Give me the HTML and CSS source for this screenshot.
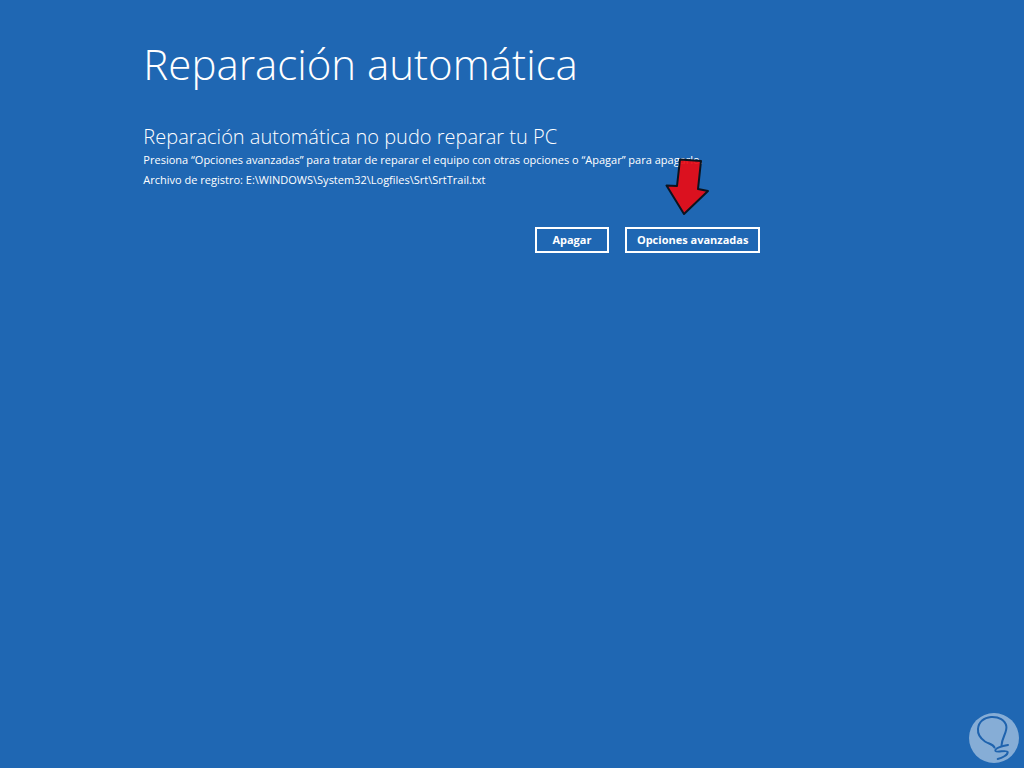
FILE: index.html
```html
<!DOCTYPE html>
<html lang="es">

<head>
    <meta charset="utf-8">
    <meta name="viewport" content="width=device-width, initial-scale=1.0">
    <title>Reparación automática</title>
    <link rel="stylesheet" href="styles.css">
</head>

<body>
    <main class="recovery">
        <h1>Reparación automática</h1>
        <h2>Reparación automática no pudo reparar tu PC</h2>
        <p class="message">Presiona “Opciones avanzadas” para tratar de reparar el equipo con otras opciones o “Apagar” para apagarlo.</p>
        <p class="message">Archivo de registro: E:\WINDOWS\System32\Logfiles\Srt\SrtTrail.txt</p>
        <div class="actions">
            <button class="button" type="button">Apagar</button>
            <div class="pointed">
                <svg class="arrow" viewBox="0 0 46 62" aria-hidden="true">
                    <path d="M15 5.500 L36 7 L33 35 L43 37 L19 60 L1.500 31.500 L12 32 Z"/>
                </svg>
                <button class="button" type="button">Opciones avanzadas</button>
            </div>
        </div>
    </main>
    <svg class="watermark" viewBox="0 0 50 50" aria-hidden="true">
        <circle cx="25" cy="25" r="25"/>
        <path d="M25.500 34.500 C24 31 20 31 16 28.500 C11 25 8.500 21 9 16 C9.500 9 15 4.500 22 4 C30 3.500 36 7 37.300 13 C38.500 19 33 24 32.500 32.500"/>
        <path d="M39 32 C33 33 25 35.500 26.500 38 C28 40 38 36.500 38.700 39 C39 42 33 45 28.700 46"/>
    </svg>
</body>

</html>
```
FILE: styles.css
```css
* {
  box-sizing: border-box;
}
body {
  margin: 0;
  min-height: 100vh;
  background-color: #1f67b3;
  color: white;
  font-family: "Open Sans", "Noto Sans", sans-serif;
}
.recovery {
  width: 617px;
  max-width: 86%;
  margin-left: 14%;
  padding-top: 34px;
}
h1, h2, p {
  margin: 0;
  font-weight: 300;
}
h1 {
  font-size: 42px;
  line-height: 60px;
  margin-bottom: 30px;
}
h2 {
  font-size: 20px;
  line-height: 26px;
}
.message {
  font-size: 11px;
  line-height: 20px;
  font-weight: 400;
}
.actions {
  display: flex;
  justify-content: flex-end;
  gap: 16px;
  margin-top: 37px;
}
.button {
  height: 26px;
  padding: 0 10px 2px;
  min-width: 74px;
  border: 2px solid white;
  background-color: transparent;
  color: white;
  font-family: inherit;
  font-size: 11px;
  font-weight: 700;
  white-space: nowrap;
  cursor: pointer;
}
.button:hover {
  background-color: rgba(255, 255, 255, 0.2);
}
.pointed {
  display: flex;
  position: relative;
}
/* arrow floats over the text above the button */
.arrow {
  position: absolute;
  left: 40px;
  bottom: 37px;
  width: 46px;
  height: 62px;
  pointer-events: none;
}
.arrow path {
  fill: #ec0a12;
  fill-opacity: 0.92;
  stroke: #0b1420;
  stroke-width: 2;
  stroke-linejoin: round;
}
.watermark {
  position: fixed;
  right: 5px;
  bottom: 5px;
  width: 50px;
  height: 50px;
}
.watermark circle {
  fill: #86add6;
}
.watermark path {
  fill: none;
  stroke: #1f63ae;
  stroke-width: 2;
  stroke-linecap: round;
}
```
